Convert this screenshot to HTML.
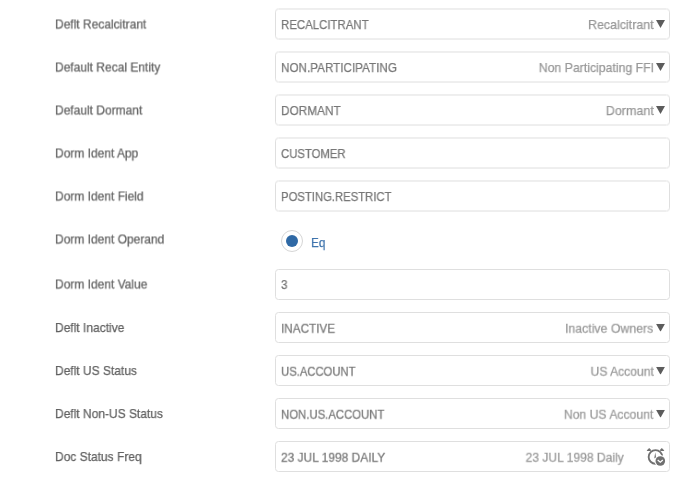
<!DOCTYPE html>
<html><head><meta charset="utf-8">
<style>
html,body{margin:0;padding:0;background:#fff;width:690px;height:479px;overflow:hidden}
body{position:relative;font-family:"Liberation Sans",sans-serif;font-size:12px}
.lbl,.val,.rt,.eq{will-change:transform;-webkit-text-stroke:0.25px currentColor}
.lbl{position:absolute;left:55px;color:#626262;white-space:nowrap;line-height:14px;font-size:13px;transform-origin:0 0;transform:translateY(0.5px) scaleX(0.922)}
.box{position:absolute;left:275px;width:393px;height:29px;border:1px solid transparent}
.box::before{content:"";position:absolute;left:-1px;top:-1px;width:393px;height:29px;border:1px solid #dfdfdf;border-radius:3.5px}
.up::before{transform:translateY(-0.5px);will-change:transform}
.val{position:absolute;left:5px;top:8px;line-height:14px;color:#777;white-space:nowrap;font-size:13px;transform-origin:0 0;transform:scaleX(var(--s))}
.rt{position:absolute;right:15.5px;top:8px;line-height:14px;color:#999;white-space:nowrap;font-size:13px;transform-origin:100% 0;transform:scaleX(var(--s))}
.tri{position:absolute;left:380px;top:10px;width:9px;height:8px;background:#5c5c5c;clip-path:polygon(0 0,100% 0,50% 100%)}
.radio{position:absolute;left:281px;top:229.5px;width:20px;height:20px;border:1px solid #d6d6d6;border-radius:50%}
.dot{position:absolute;left:4px;top:4px;width:12px;height:12px;border-radius:50%;background:#2f69a5}
.eq{position:absolute;left:310.5px;top:236.3px;color:#3f74ad;line-height:14px;font-size:13px;transform-origin:0 0;transform:scaleX(0.9)}
.lo{transform:translateY(1px) scaleX(0.922)}
.lo2 .tri{transform:translateY(0.7px)}
.lo2 .rt{transform:translateY(0.7px) scaleX(var(--s))}
.lo2 .val{transform:translateY(0.7px) scaleX(var(--s))}
</style></head><body>
<div class="lbl" style="top:17px">Deflt Recalcitrant</div>
<div class="box up" style="top:9px"><div class="val" style="--s:0.879">RECALCITRANT</div><div class="rt" style="--s:0.956">Recalcitrant</div><div class="tri"></div></div>

<div class="lbl" style="top:60px">Default Recal Entity</div>
<div class="box up" style="top:52px"><div class="val" style="--s:0.898">NON.PARTICIPATING</div><div class="rt" style="right:15px;--s:0.945">Non Participating FFI</div><div class="tri"></div></div>

<div class="lbl" style="top:103px">Default Dormant</div>
<div class="box up" style="top:95px"><div class="val" style="--s:0.908">DORMANT</div><div class="rt" style="--s:0.965">Dormant</div><div class="tri"></div></div>

<div class="lbl" style="top:146px">Dorm Ident App</div>
<div class="box up" style="top:138px"><div class="val" style="--s:0.87">CUSTOMER</div></div>

<div class="lbl" style="top:189px">Dorm Ident Field</div>
<div class="box up" style="top:181px"><div class="val" style="--s:0.869">POSTING.RESTRICT</div></div>

<div class="lbl" style="top:232px">Dorm Ident Operand</div>
<div class="radio"><div class="dot"></div></div>
<div class="eq">Eq</div>

<div class="lbl" style="top:277px">Dorm Ident Value</div>
<div class="box" style="top:269px"><div class="val" style="--s:0.9">3</div></div>

<div class="lbl lo" style="top:320px">Deflt Inactive</div>
<div class="box lo2" style="top:312px"><div class="val" style="--s:0.903">INACTIVE</div><div class="rt" style="--s:0.946">Inactive Owners</div><div class="tri"></div></div>

<div class="lbl lo" style="top:363px">Deflt US Status</div>
<div class="box lo2" style="top:355px"><div class="val" style="--s:0.867">US.ACCOUNT</div><div class="rt" style="--s:0.934">US Account</div><div class="tri"></div></div>

<div class="lbl lo" style="top:406px">Deflt Non-US Status</div>
<div class="box lo2" style="top:398px"><div class="val" style="--s:0.873">NON.US.ACCOUNT</div><div class="rt" style="--s:0.939">Non US Account</div><div class="tri"></div></div>

<div class="lbl lo" style="top:449px">Doc Status Freq</div>
<div class="box lo2" style="top:441px"><div class="val" style="--s:0.919">23 JUL 1998 DAILY</div><div class="rt" style="right:45.5px;--s:0.928">23 JUL 1998 Daily</div>
</div>
<svg style="position:absolute;left:644px;top:445px" width="24" height="24" viewBox="0 0 24 24">
<g fill="#707070" stroke="none">
<path d="M2.7 5.4 L5.2 2.9 L7.2 5.0 L6.5 6.1 L3.3 6.1 Z"/>
<path d="M20.3 5.4 L17.8 2.9 L15.8 5.0 L16.5 6.1 L19.7 6.1 Z"/>
</g>
<circle cx="11.5" cy="11.9" r="6.85" fill="none" stroke="#707070" stroke-width="1.85"/>
<path d="M11.25 7.3 L10.3 13.2 L12.2 13.2 Z" fill="#707070"/>
<circle cx="16.3" cy="16" r="5.9" fill="#fff"/>
<circle cx="16.3" cy="16" r="4.8" fill="#707070"/>
<path d="M13.7 15 L16.3 17.3 L18.8 15" fill="none" stroke="#fff" stroke-width="1.2"/>
</svg>
</body></html>
